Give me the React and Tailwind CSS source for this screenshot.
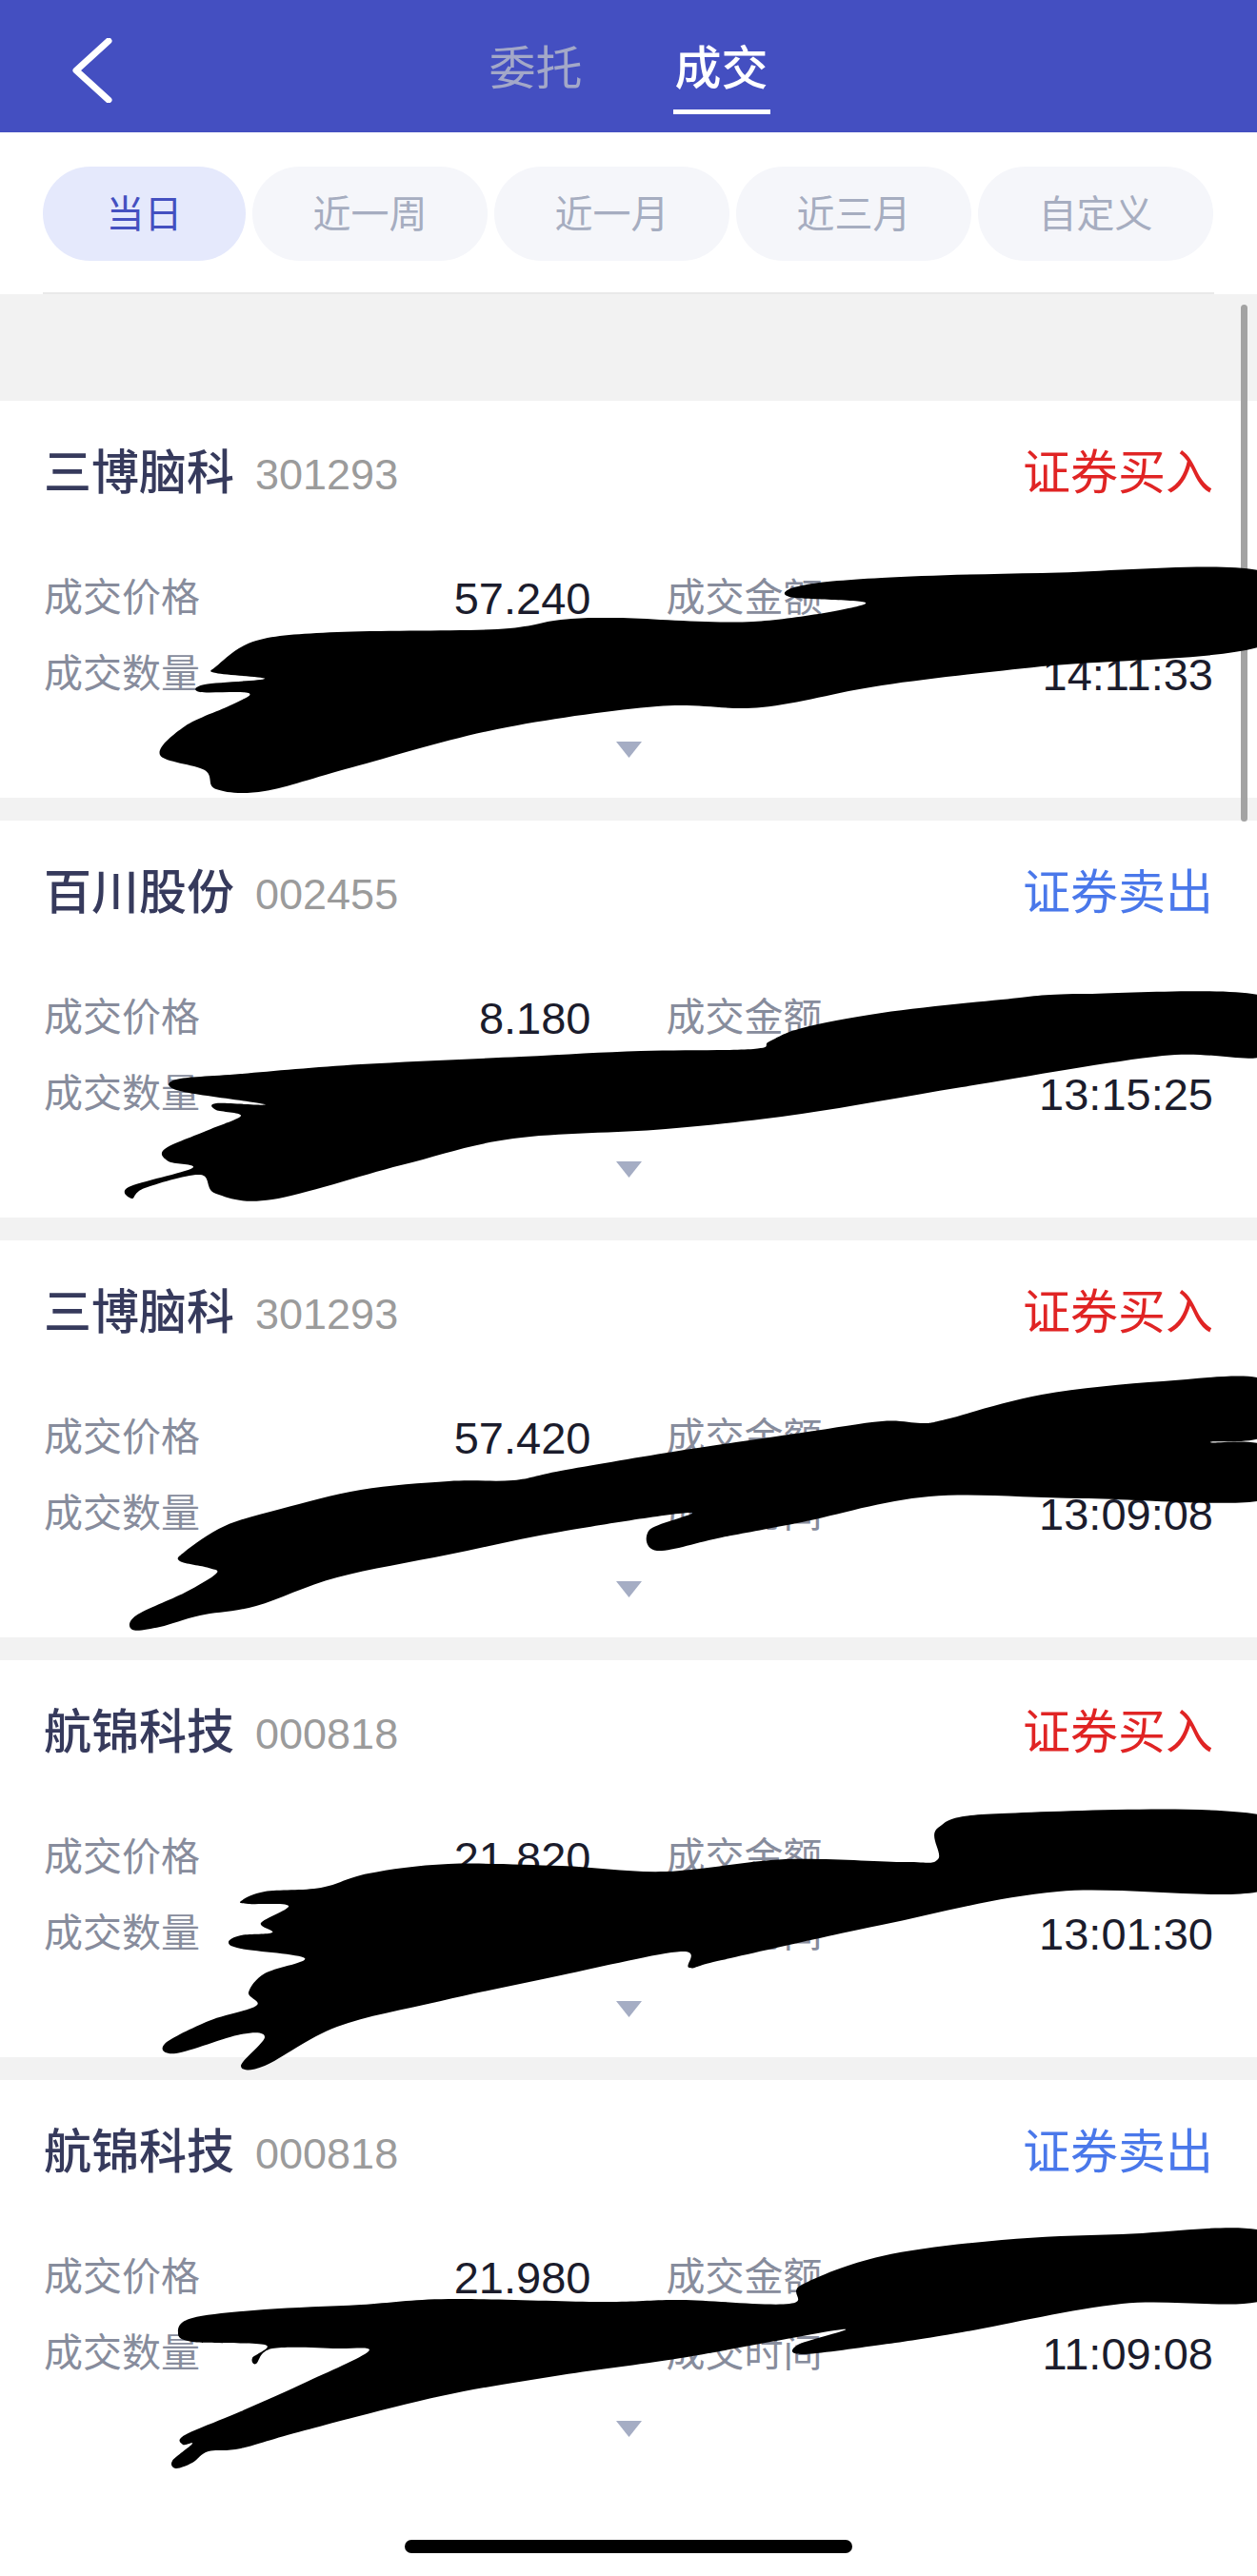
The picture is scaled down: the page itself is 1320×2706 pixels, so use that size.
import React from "react";

const FONT = { fontFamily: "'Liberation Sans','Noto Sans CJK SC',sans-serif" };

const ranges = ["当日", "近一周", "近一月", "近三月", "自定义"];

const trades = [
  {
    name: "三博脑科",
    code: "301293",
    side: "buy",
    price: "57.240",
    time: "14:11:33",
    mark: [[227,279],[269,252],[354,243],[522,240],[589,230],[648,228],[791,232],[909,213],[829,206],[842,194],[926,186],[1094,181],[1330,180],[1330,256],[1094,279],[926,299],[800,322],[690,321],[522,345],[370,385],[278,410],[227,408],[215,388],[168,372],[194,342],[244,319],[261,307],[210,306],[215,298],[278,292],[227,286]],
  },
  {
    name: "百川股份",
    code: "002455",
    side: "sell",
    price: "8.180",
    time: "13:15:25",
    mark: [[808,232],[842,218],[926,202],[1052,188],[1136,182],[1330,185],[1330,246],[1221,247],[1010,280],[842,308],[699,324],[539,334],[421,362],[286,398],[227,392],[210,372],[152,386],[139,397],[135,385],[202,365],[177,358],[173,345],[219,325],[253,310],[227,304],[227,297],[278,298],[189,284],[185,272],[253,266],[379,256],[547,248],[673,242],[791,240]],
  },
  {
    name: "三博脑科",
    code: "301293",
    side: "buy",
    price: "57.420",
    time: "13:09:08",
    mark: [[194,327],[236,300],[295,282],[379,262],[471,253],[539,252],[589,242],[707,222],[842,202],[926,190],[968,192],[993,188],[1094,162],[1221,148],[1330,147],[1330,204],[1271,212],[1330,217],[1330,272],[1136,271],[976,269],[842,296],[758,312],[690,326],[682,304],[724,286],[589,306],[471,330],[354,354],[269,384],[210,394],[168,406],[139,409],[143,394],[194,370],[227,350],[219,344],[189,337]],
  },
  {
    name: "航锦科技",
    code: "000818",
    side: "buy",
    price: "21.820",
    time: "13:01:30",
    mark: [[253,253],[278,243],[337,239],[387,224],[471,214],[589,216],[699,222],[825,209],[951,212],[985,209],[985,176],[1052,161],[1330,164],[1330,241],[1111,243],[926,278],[758,315],[724,323],[715,306],[589,331],[463,358],[354,385],[278,426],[253,426],[278,396],[253,393],[185,413],[173,403],[219,379],[269,363],[261,349],[278,329],[320,313],[253,303],[240,296],[253,289],[286,286],[274,276],[303,258],[261,256]],
  },
  {
    name: "航锦科技",
    code: "000818",
    side: "sell",
    price: "21.980",
    time: "11:09:08",
    mark: [[829,235],[842,215],[926,185],[1052,168],[1178,162],[1330,160],[1330,230],[1178,235],[1010,265],[926,278],[842,288],[838,278],[884,262],[715,292],[589,310],[463,332],[320,368],[253,387],[219,390],[202,402],[185,408],[181,400],[202,382],[192,383],[194,373],[253,348],[320,318],[387,285],[354,282],[286,282],[269,298],[265,292],[278,278],[202,275],[187,265],[202,250],[278,241],[379,236],[471,230],[631,233],[715,231]],
  },
];

// closed catmull-rom -> bezier, for the marker scribble
const smooth = (pts) => {
  const n = pts.length;
  let d = `M${pts[0][0]},${pts[0][1]}`;
  for (let i = 0; i < n; i++) {
    const p0 = pts[(i - 1 + n) % n];
    const p1 = pts[i];
    const p2 = pts[(i + 1) % n];
    const p3 = pts[(i + 2) % n];
    const c1x = p1[0] + (p2[0] - p0[0]) / 6;
    const c1y = p1[1] + (p2[1] - p0[1]) / 6;
    const c2x = p2[0] - (p3[0] - p1[0]) / 6;
    const c2y = p2[1] - (p3[1] - p1[1]) / 6;
    d += ` C${c1x.toFixed(1)},${c1y.toFixed(1)} ${c2x.toFixed(1)},${c2y.toFixed(1)} ${p2[0]},${p2[1]}`;
  }
  return d + "Z";
};

const Field = ({ label, value }) => (
  <div className="flex h-[48px] items-center justify-between">
    <span className="text-[41px] text-[#878c9c]">{label}</span>
    <span className="text-[47px] text-[#1b1c2c]">{value}</span>
  </div>
);

const TradeCard = ({ t }) => (
  <div className="relative h-[417px] bg-white px-[46px] pt-[48px]">
    {/* title */}
    <div className="flex h-[56px] items-center justify-between">
      <div className="flex items-baseline gap-[22px]">
        <span className="text-[50px] font-medium text-[#363a5c]">{t.name}</span>
        <span className="text-[45px] text-[#9b9b9b]">{t.code}</span>
      </div>
      <span
        className={
          t.side === "buy"
            ? "text-[50px] text-[#e02424]"
            : "text-[50px] text-[#4a78ea]"
        }
      >
        {t.side === "buy" ? "证券买入" : "证券卖出"}
      </span>
    </div>

    {/* details */}
    <div className="mt-[80px] grid grid-cols-2 gap-x-[79px] gap-y-[32px]">
      <Field label="成交价格" value={t.price} />
      <Field label="成交金额" value="" />
      <Field label="成交数量" value="" />
      <Field label="成交时间" value={t.time} />
    </div>

    {/* expand arrow */}
    <div className="mt-[46px] flex justify-center">
      <svg width="27" height="17" viewBox="0 0 27 17">
        <polygon points="0,0 27,0 13.5,17" fill="#a5adc4" />
      </svg>
    </div>

    {/* marker scribble */}
    <svg
      className="pointer-events-none absolute left-0 top-0 z-10 overflow-visible"
      width="1320"
      height="417"
      viewBox="0 0 1320 417"
    >
      <path d={smooth(t.mark)} fill="#000" />
    </svg>
  </div>
);

export default function App() {
  return (
    <div className="relative min-h-[2706px] w-[1320px] overflow-hidden bg-white" style={FONT}>
      {/* header */}
      <div className="relative flex h-[139px] items-center justify-center bg-[#444fc1]">
        <svg
          className="absolute left-[74px] top-[40px]"
          width="46"
          height="68"
          viewBox="0 0 46 68"
        >
          <polyline
            points="40,3 6,34 40,65"
            fill="none"
            stroke="#fff"
            strokeWidth="7"
            strokeLinecap="round"
            strokeLinejoin="round"
          />
        </svg>
        <div className="flex gap-[93px] pt-[22px]">
          <div className="flex flex-col items-center">
            <span className="text-[49px] leading-[60px] text-[#a3a8c8]">委托</span>
            <span className="mt-[13px] h-[5px] w-[102px]" />
          </div>
          <div className="flex flex-col items-center">
            <span className="text-[49px] font-medium leading-[60px] text-white">成交</span>
            <span className="mt-[13px] h-[5px] w-[102px] bg-white" />
          </div>
        </div>
      </div>

      {/* range pills */}
      <div className="flex gap-[7px] px-[45px] pt-[36px]">
        {ranges.map((r, i) => (
          <div
            key={r}
            className={
              i === 0
                ? "flex h-[99px] w-[213px] items-center justify-center rounded-full bg-[#e5e9fc] text-[40px] text-[#4450c0]"
                : "flex h-[99px] w-[247px] items-center justify-center rounded-full bg-[#f5f6fa] text-[40px] text-[#a6adc0]"
            }
          >
            {r}
          </div>
        ))}
      </div>
      <div className="mx-[45px] mt-[33px] h-[2px] bg-[#e9e9e9]" />
      <div className="h-[112px] bg-[#f2f2f2]" />

      {/* trades */}
      <div className="flex flex-col gap-[24px] bg-[#f2f2f2]">
        {trades.map((t, i) => (
          <TradeCard key={i} t={t} />
        ))}
      </div>

      {/* home indicator */}
      <div className="flex h-[104px] justify-center bg-white pt-[66px]">
        <div className="h-[14px] w-[470px] rounded-full bg-black" />
      </div>

      {/* scroll indicator */}
      <div className="absolute right-[10px] top-[320px] h-[543px] w-[7px] rounded-full bg-[#a3a3a3]" />
    </div>
  );
}
